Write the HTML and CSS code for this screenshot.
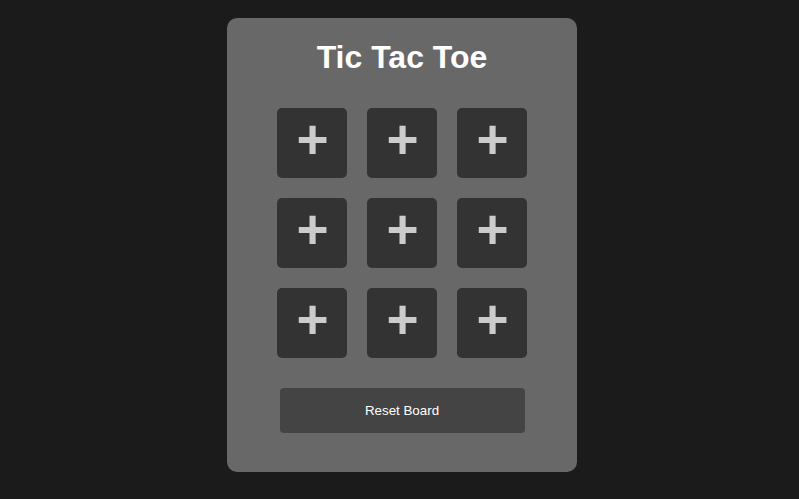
FILE: index.html
```html
<!DOCTYPE html>
<html>
<head>
  <title>Tic Tac Toe</title>
  <link rel="stylesheet" href="styles.css">
</head>
<body>
  <div class="game">
    <h1>Tic Tac Toe</h1>
    <div class="board">
      <button class="cell">+</button>
      <button class="cell">+</button>
      <button class="cell">+</button>
      <button class="cell">+</button>
      <button class="cell">+</button>
      <button class="cell">+</button>
      <button class="cell">+</button>
      <button class="cell">+</button>
      <button class="cell">+</button>
    </div>
    <button class="reset">Reset Board</button>
  </div>
</body>
</html>
```

FILE: styles.css
```css
body {
  font-family: "Liberation Sans", Arial, sans-serif;
  background-color: #1b1b1b;
  margin: 0;
  padding: 0 0 0 5px;
}

.game {
  width: 350px;
  height: 454px;
  margin: 18px auto 0;
  padding: 20px 50px 0;
  box-sizing: border-box;
  background-color: #686868;
  border-radius: 10px;
  display: flex;
  flex-direction: column;
  align-items: center;
}

h1 {
  margin: 0;
  color: #fff;
  font-size: 32px;
  line-height: 38px;
}

.board {
  margin-top: 32px;
  display: grid;
  grid-template-columns: repeat(3, 70px);
  grid-auto-rows: 70px;
  gap: 20px;
}

.cell {
  background-color: #333;
  border: none;
  border-radius: 5px;
  color: #ccc;
  font-family: inherit;
  font-weight: bold;
  font-size: 55px;
  line-height: 1;
  padding: 0 0 8px 1px;
  cursor: pointer;
}

.reset {
  margin-top: 30px;
  width: 245px;
  height: 45px;
  background-color: #444;
  color: #fff;
  border: none;
  border-radius: 4px;
  font-family: inherit;
  font-size: 13.333px;
  cursor: pointer;
}
```
